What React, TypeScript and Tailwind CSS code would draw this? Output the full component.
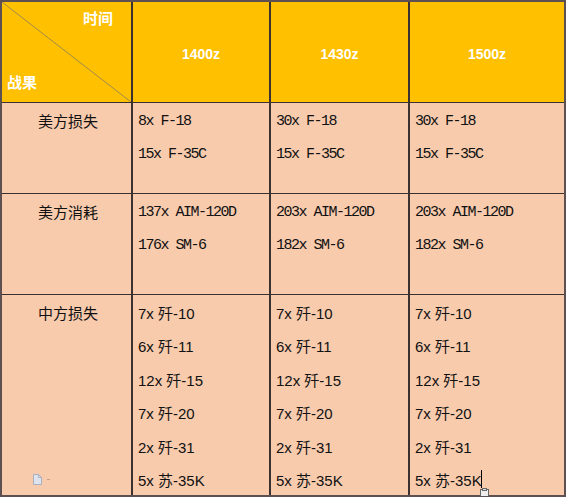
const cols = ['1400z', '1430z', '1500z'];

const usLoss = [
  ['8x F-18', '15x F-35C'],
  ['30x F-18', '15x F-35C'],
  ['30x F-18', '15x F-35C'],
];

const usUse = [
  ['137x AIM-120D', '176x SM-6'],
  ['203x AIM-120D', '182x SM-6'],
  ['203x AIM-120D', '182x SM-6'],
];

const cnLoss = ['7x 歼-10', '6x 歼-11', '12x 歼-15', '7x 歼-20', '2x 歼-31', '5x 苏-35K'];

const cjk = "font-['Noto_Sans_CJK_SC',sans-serif]";
const mono = "font-['Liberation_Mono','Noto_Sans_CJK_SC',monospace]";
const sans = "font-['Liberation_Sans','Noto_Sans_CJK_SC',sans-serif]";

function Label({ text }: { text: string }) {
  return (
    <div className={`bg-[#f8cbad] pl-[36px] pt-[1px] text-[15px] leading-[33px] text-[#111] ${cjk}`}>{text}</div>
  );
}

function MonoCell({ lines }: { lines: string[] }) {
  return (
    <div className={`bg-[#f8cbad] pl-[5px] pt-[2px] text-[15px] leading-[33px] tracking-[-1.5px] text-[#111] ${mono}`}>
      {lines.map((l) => (
        <div key={l}>{l}</div>
      ))}
    </div>
  );
}

export default function App() {
  return (
    <div className="w-[567px] h-[500px] bg-white">
      <div className="relative w-[566px] h-[497px] border-2 border-[#5e5050] bg-[#3b3131] grid grid-cols-[129px_136px_137px_154px] grid-rows-[100px_90px_100px_200px] gap-x-[2px] gap-y-px">
        {/* header corner with diagonal */}
        <div className={`relative bg-[#ffc000] text-white font-bold text-[15px] ${cjk}`}>
          <svg className="absolute inset-0" width="129" height="100">
            <line x1="0" y1="0" x2="129" y2="100" stroke="#a08a4a" strokeWidth="1" />
          </svg>
          <span className="absolute left-[81px] top-[6px] leading-[20px]">时间</span>
          <span className="absolute left-[5px] top-[70px] leading-[20px]">战果</span>
        </div>
        {cols.map((c) => (
          <div
            key={c}
            className={`bg-[#ffc000] flex items-center justify-center pt-[4px] text-white font-bold text-[14px] ${sans}`}
          >
            {c}
          </div>
        ))}

        <Label text="美方损失" />
        {usLoss.map((lines, i) => (
          <MonoCell key={i} lines={lines} />
        ))}

        <Label text="美方消耗" />
        {usUse.map((lines, i) => (
          <MonoCell key={i} lines={lines} />
        ))}

        <div className={`relative bg-[#f8cbad] pl-[36px] pt-[1px] text-[15px] leading-[33px] text-[#111] ${cjk}`}>
          中方损失
          <div className="absolute left-[31px] top-[179px] flex items-center gap-[5px]">
            <svg width="9" height="11" viewBox="0 0 9 11">
              <path d="M0.5 0.5h5l3 3v7h-8z" fill="#dfe3ee" stroke="#a9b0c2" />
              <path d="M5.5 0.5v3h3" fill="none" stroke="#a9b0c2" />
            </svg>
            <span className="w-[3px] h-px bg-[#c9a088]" />
          </div>
        </div>
        {cols.map((c, i) => (
          <div
            key={c}
            className={`relative bg-[#f8cbad] pl-[5px] pt-[2px] text-[15px] leading-[33.4px] text-[#111] ${sans}`}
          >
            {cnLoss.map((l) => (
              <div key={l}>{l}</div>
            ))}
            {i === 2 && (
              <>
                <span className="absolute left-[71px] top-[175px] w-px h-[18px] bg-black" />
                <svg className="absolute left-[69px] top-[193px]" width="12" height="8" viewBox="0 0 12 8">
                  <rect x="1.5" y="1.5" width="8" height="8" fill="#eee" stroke="#666" />
                  <rect x="3.5" y="0.5" width="4" height="2" fill="#ddd" stroke="#666" />
                </svg>
              </>
            )}
          </div>
        ))}
      </div>
    </div>
  );
}
